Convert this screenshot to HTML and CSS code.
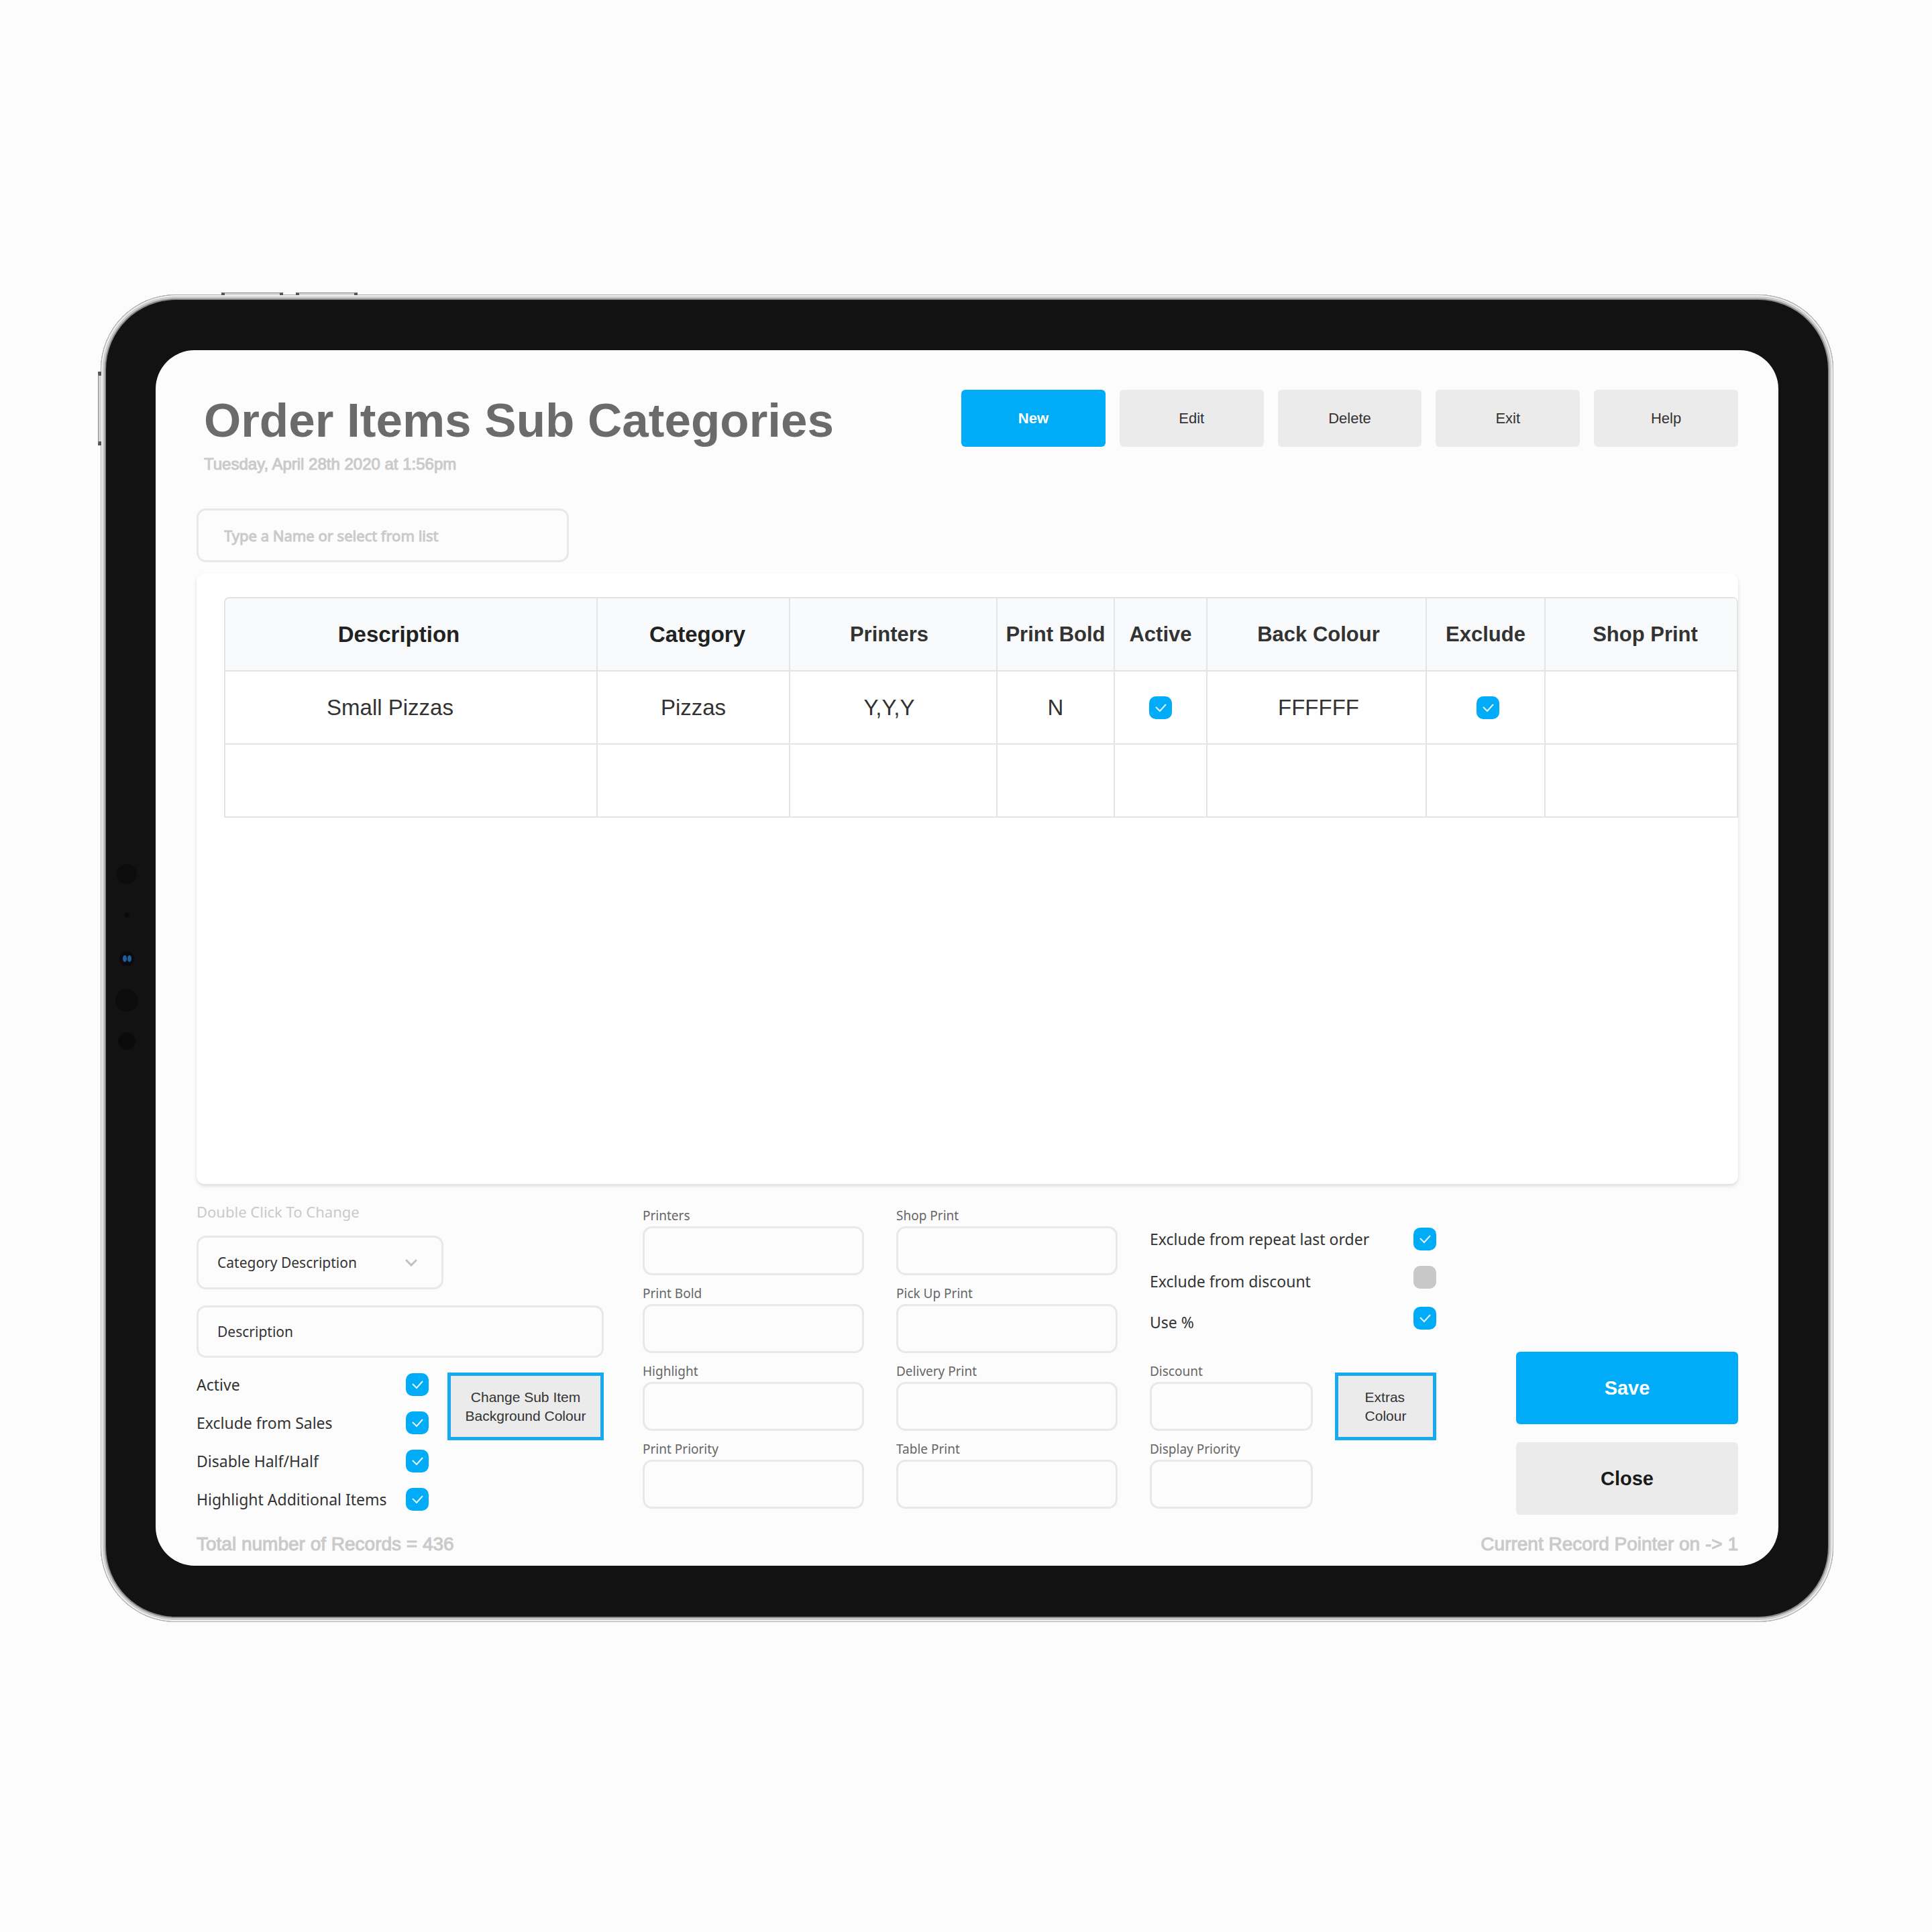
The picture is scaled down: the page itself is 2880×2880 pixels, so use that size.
FILE: index.html
```html
<!DOCTYPE html>
<html lang="en">
<head>
<meta charset="utf-8">
<meta name="viewport" content="width=device-width, initial-scale=1">
<title>Order Items Sub Categories</title>
<link rel="stylesheet" href="styles.css">
</head>
<body>
<div class="device">
  <span class="key key-top key-up"></span>
  <span class="key key-top key-down"></span>
  <span class="key key-side"></span>
  <svg class="sensors" width="40" height="290" viewBox="0 0 40 290" aria-hidden="true">
    <circle cx="20" cy="19" r="15" fill="#0c0c0c"/>
    <circle cx="20" cy="80" r="4" fill="#0a0a0a"/>
    <circle cx="20" cy="145" r="11" fill="#0b0b0d"/>
    <ellipse cx="17" cy="145" rx="3" ry="5" fill="#1f5f9f"/>
    <ellipse cx="24" cy="145" rx="3" ry="5" fill="#1f5f9f"/>
    <circle cx="20" cy="207" r="17" fill="#0c0c0c"/>
    <circle cx="20" cy="268" r="13" fill="#0b0b0b"/>
  </svg>

  <main class="screen">
    <header class="top">
      <div class="heading">
        <h1>Order Items Sub Categories</h1>
        <p class="date">Tuesday, April 28th 2020 at 1:56pm</p>
      </div>
      <nav class="actions">
        <button type="button" class="btn btn-primary">New</button>
        <button type="button" class="btn">Edit</button>
        <button type="button" class="btn">Delete</button>
        <button type="button" class="btn">Exit</button>
        <button type="button" class="btn">Help</button>
      </nav>
    </header>

    <input class="box search" type="text" aria-label="Name" placeholder="Type a Name or select from list">

    <section class="panel">
      <table>
        <colgroup>
          <col class="c-desc"><col class="c-cat"><col class="c-printers"><col class="c-bold"><col class="c-active"><col class="c-colour"><col class="c-exclude"><col>
        </colgroup>
        <thead>
          <tr>
            <th class="major desc">Description</th>
            <th class="major cat">Category</th>
            <th class="printers">Printers</th>
            <th>Print Bold</th>
            <th>Active</th>
            <th class="colour">Back Colour</th>
            <th>Exclude</th>
            <th class="shop">Shop Print</th>
          </tr>
        </thead>
        <tbody>
          <tr>
            <td class="name">Small Pizzas</td>
            <td>Pizzas</td>
            <td class="printers">Y,Y,Y</td>
            <td>N</td>
            <td><input class="check" type="checkbox" aria-label="Active" checked></td>
            <td class="colour">FFFFFF</td>
            <td class="colour"><input class="check" type="checkbox" aria-label="Exclude" checked></td>
            <td></td>
          </tr>
          <tr><td></td><td></td><td></td><td></td><td></td><td></td><td></td><td></td></tr>
        </tbody>
      </table>
    </section>

    <form class="editor">
      <div class="general">
        <label class="hint" for="category">Double Click To Change</label>
        <select class="box category" id="category"><option>Category Description</option></select>
        <input class="box description" type="text" aria-label="Description" value="Description">
        <div class="general-row">
          <div class="flags">
            <label class="flag">Active <input class="check" type="checkbox" checked></label>
            <label class="flag">Exclude from Sales <input class="check" type="checkbox" checked></label>
            <label class="flag">Disable Half/Half <input class="check" type="checkbox" checked></label>
            <label class="flag">Highlight Additional Items <input class="check" type="checkbox" checked></label>
          </div>
          <button type="button" class="btn-outline btn-background">Change Sub Item<br>Background Colour</button>
        </div>
      </div>

      <div class="fields">
        <label class="field">Printers <input class="box" type="text"></label>
        <label class="field">Print Bold <input class="box" type="text"></label>
        <label class="field">Highlight <input class="box" type="text"></label>
        <label class="field">Print Priority <input class="box" type="text"></label>
      </div>

      <div class="fields">
        <label class="field">Shop Print <input class="box" type="text"></label>
        <label class="field">Pick Up Print <input class="box" type="text"></label>
        <label class="field">Delivery Print <input class="box" type="text"></label>
        <label class="field">Table Print <input class="box" type="text"></label>
      </div>

      <div class="extras">
        <div class="rules">
          <label class="flag">Exclude from repeat last order <input class="check" type="checkbox" checked></label>
          <label class="flag flag-tall">Exclude from discount <input class="check" type="checkbox"></label>
          <label class="flag flag-tall">Use % <input class="check" type="checkbox" checked></label>
        </div>
        <div class="extras-row">
          <div class="fields fields-short">
            <label class="field">Discount <input class="box" type="text"></label>
            <label class="field">Display Priority <input class="box" type="text"></label>
          </div>
          <button type="button" class="btn-outline btn-extras"><span>Extras<br>Colour</span></button>
        </div>
      </div>

      <div class="submit">
        <button type="submit" class="btn btn-large btn-primary">Save</button>
        <button type="button" class="btn btn-large">Close</button>
      </div>
    </form>

    <footer class="status">
      <span>Total number of Records = 436</span>
      <span>Current Record Pointer on -&gt; 1</span>
    </footer>
  </main>
</div>
</body>
</html>
```
FILE: styles.css
```css
* { box-sizing: border-box; }

:root {
  --blue: #00abf7;
  --grey: #ebebeb;
  --line: #e4e4e4;
  --muted: #cacaca;
  --ink: #333;
  --ui: "Liberation Sans", Arial, sans-serif;
  --form: "Noto Sans", "Segoe UI", sans-serif;
}

body {
  margin: 0;
  padding: 439px 147px 461px 150px;
  background: #fcfcfc;
  color: var(--ink);
  font-family: var(--ui);
}

h1, p { margin: 0; }

button, input, select { font: inherit; color: inherit; margin: 0; }

/* Tablet frame */
.device {
  position: relative;
  padding: 83px 82px 84px;
  border-radius: 112px;
  background: #121212;
  box-shadow:
    inset 0 0 0 1px #ababab,
    inset 0 0 0 3px #f0f0f0,
    inset 0 0 0 6px #cacaca,
    inset 0 0 0 8px #8a8a8a;
}

.key {
  position: absolute;
  border: 1px solid #8a8a8a;
  background: #d6d6d6;
}

.key-top { top: -3px; width: 92px; height: 4px; border-width: 1px 5px 0; border-color: #8a8a8a #555; }
.key-up { left: 180px; }
.key-down { left: 291px; }
.key-side { top: 115px; left: -4px; width: 5px; height: 110px; border-width: 6px 0 6px 1px; border-color: #555 #8a8a8a; }

.sensors {
  position: absolute;
  left: 19px;
  top: 50%;
  transform: translateY(-50%);
}

.screen {
  display: flex;
  flex-direction: column;
  padding: 59px 60px 15px 61px;
  border-radius: 58px;
  background: #fcfcfc;
}

/* Header */
.top {
  display: flex;
  justify-content: space-between;
  align-items: flex-start;
}

.heading { padding: 6px 0 0 11px; }

h1 {
  color: #6b6b6b;
  font-size: 71px;
  line-height: 80px;
}

.date {
  margin-top: 10px;
  color: var(--muted);
  font-size: 24px;
  line-height: 30px;
  -webkit-text-stroke: 1px var(--muted);
}

.actions {
  display: grid;
  grid-template-columns: repeat(5, 1fr);
  gap: 21px;
  width: 1158px;
}

.btn {
  height: 85px;
  border: 0;
  border-radius: 6px;
  background: var(--grey);
  font-size: 22px;
}

.btn-primary {
  background: var(--blue);
  color: #fff;
  font-weight: 700;
}

.box {
  width: 100%;
  border: 3px solid #e8e8e8;
  border-radius: 14px;
  background: #fcfcfc;
  font-family: var(--form);
}

.search {
  width: 555px;
  height: 80px;
  margin-top: 51px;
  padding: 0 38px;
  font-size: 22px;
}

.search::placeholder {
  color: var(--muted);
  opacity: 1;
  -webkit-text-stroke: 1px var(--muted);
}

/* Record table */
.panel {
  min-height: 910px;
  margin-top: 17px;
  padding: 35px 0 0 41px;
  border-radius: 12px;
  background: #fff;
  box-shadow: 0 3px 5px rgba(0, 0, 0, 0.13);
}

table {
  width: 100%;
  table-layout: fixed;
  border-collapse: separate;
  border-spacing: 0;
  border-top: 2px solid var(--line);
  border-left: 2px solid var(--line);
  border-radius: 8px 8px 0 0;
}

.c-desc { width: 555px; }
.c-cat { width: 287px; }
.c-printers { width: 309px; }
.c-bold { width: 175px; }
.c-active { width: 138px; }
.c-colour { width: 327px; }
.c-exclude { width: 177px; }

th, td {
  height: 109px;
  padding: 0;
  border-right: 2px solid var(--line);
  border-bottom: 2px solid var(--line);
  text-align: center;
  vertical-align: middle;
}

th {
  background: #f9fafb;
  font-size: 31px;
}

th:first-child { border-top-left-radius: 6px; }
th:last-child { border-top-right-radius: 6px; }

.major { color: #222; font-size: 33px; }
.desc { padding-right: 36px; }
.cat { padding-left: 12px; }
.printers { padding-right: 12px; }
.colour { padding-left: 6px; }
.shop { padding-left: 12px; }

td { font-size: 33px; }
.name { padding-right: 62px; }

.check {
  display: block;
  flex: none;
  width: 34px;
  height: 34px;
  appearance: none;
  border-radius: 10px;
  background: #c8c8c8;
}

.check:checked {
  background: var(--blue) url("data:image/svg+xml,%3Csvg xmlns='http://www.w3.org/2000/svg' viewBox='0 0 34 34'%3E%3Cpath d='M10 16l6 6 9-10' fill='none' stroke='%23e6f7ff' stroke-width='2'/%3E%3C/svg%3E");
}

td .check { margin: 0 auto; }

/* Record editor */
.editor {
  display: grid;
  grid-template-columns: 617fr 330fr 330fr 427fr 402fr;
  gap: 48px;
  font-family: var(--form);
}

.general { padding: 26px 10px 6px 0; }

.hint {
  display: block;
  color: var(--muted);
  font-size: 22px;
  line-height: 30px;
}

.category {
  display: block;
  width: 368px;
  height: 80px;
  margin-top: 21px;
  padding: 0 28px;
  appearance: none;
  background: #fcfcfc url("data:image/svg+xml,%3Csvg xmlns='http://www.w3.org/2000/svg' width='18' height='12'%3E%3Cpath d='M1 2l8 8 8-8' fill='none' stroke='%23c0c0c0' stroke-width='3'/%3E%3C/svg%3E") no-repeat right 36px center;
  font-size: 21px;
}

.description {
  height: 78px;
  margin-top: 24px;
  padding: 0 28px;
  font-size: 21px;
}

.general-row {
  display: flex;
  justify-content: space-between;
  align-items: flex-start;
  margin-top: 22px;
}

.flags {
  display: grid;
  gap: 23px;
  width: 346px;
  padding-top: 1px;
}

.flag {
  display: flex;
  justify-content: space-between;
  font-size: 23px;
  line-height: 34px;
  white-space: nowrap;
}

.flag-tall { line-height: 46px; }

.btn-outline {
  height: 101px;
  padding: 0;
  border: 5px solid #17aaf0;
  background: var(--grey);
  font: 21px/28px var(--ui);
}

.btn-background { width: 233px; }

.fields {
  display: grid;
  gap: 13px;
  align-content: start;
  padding-top: 33px;
}

.field {
  display: grid;
  gap: 2px;
  color: #666;
  font-size: 19px;
  line-height: 28px;
}

.field .box { height: 73px; }

.extras { padding-top: 65px; }

.rules {
  display: grid;
  grid-template-rows: 42px 46px 46px;
  gap: 15px;
}

.extras-row {
  display: flex;
  justify-content: space-between;
  align-items: flex-start;
  margin-top: 36px;
}

.fields-short { width: 243px; padding-top: 0; }

.btn-extras { width: 151px; margin-top: 16px; }
.btn-extras span { display: inline-block; text-align: left; }

.submit {
  display: grid;
  gap: 27px;
  align-self: end;
  padding-left: 71px;
}

.btn-large {
  height: 108px;
  color: #1a1a1a;
  font-family: var(--ui);
  font-size: 29px;
  font-weight: 700;
}

.btn-large.btn-primary { color: #fff; }

.status {
  display: flex;
  justify-content: space-between;
  margin-top: 27px;
  color: var(--muted);
  font-size: 28px;
  line-height: 34px;
  -webkit-text-stroke: 1px var(--muted);
}
```
